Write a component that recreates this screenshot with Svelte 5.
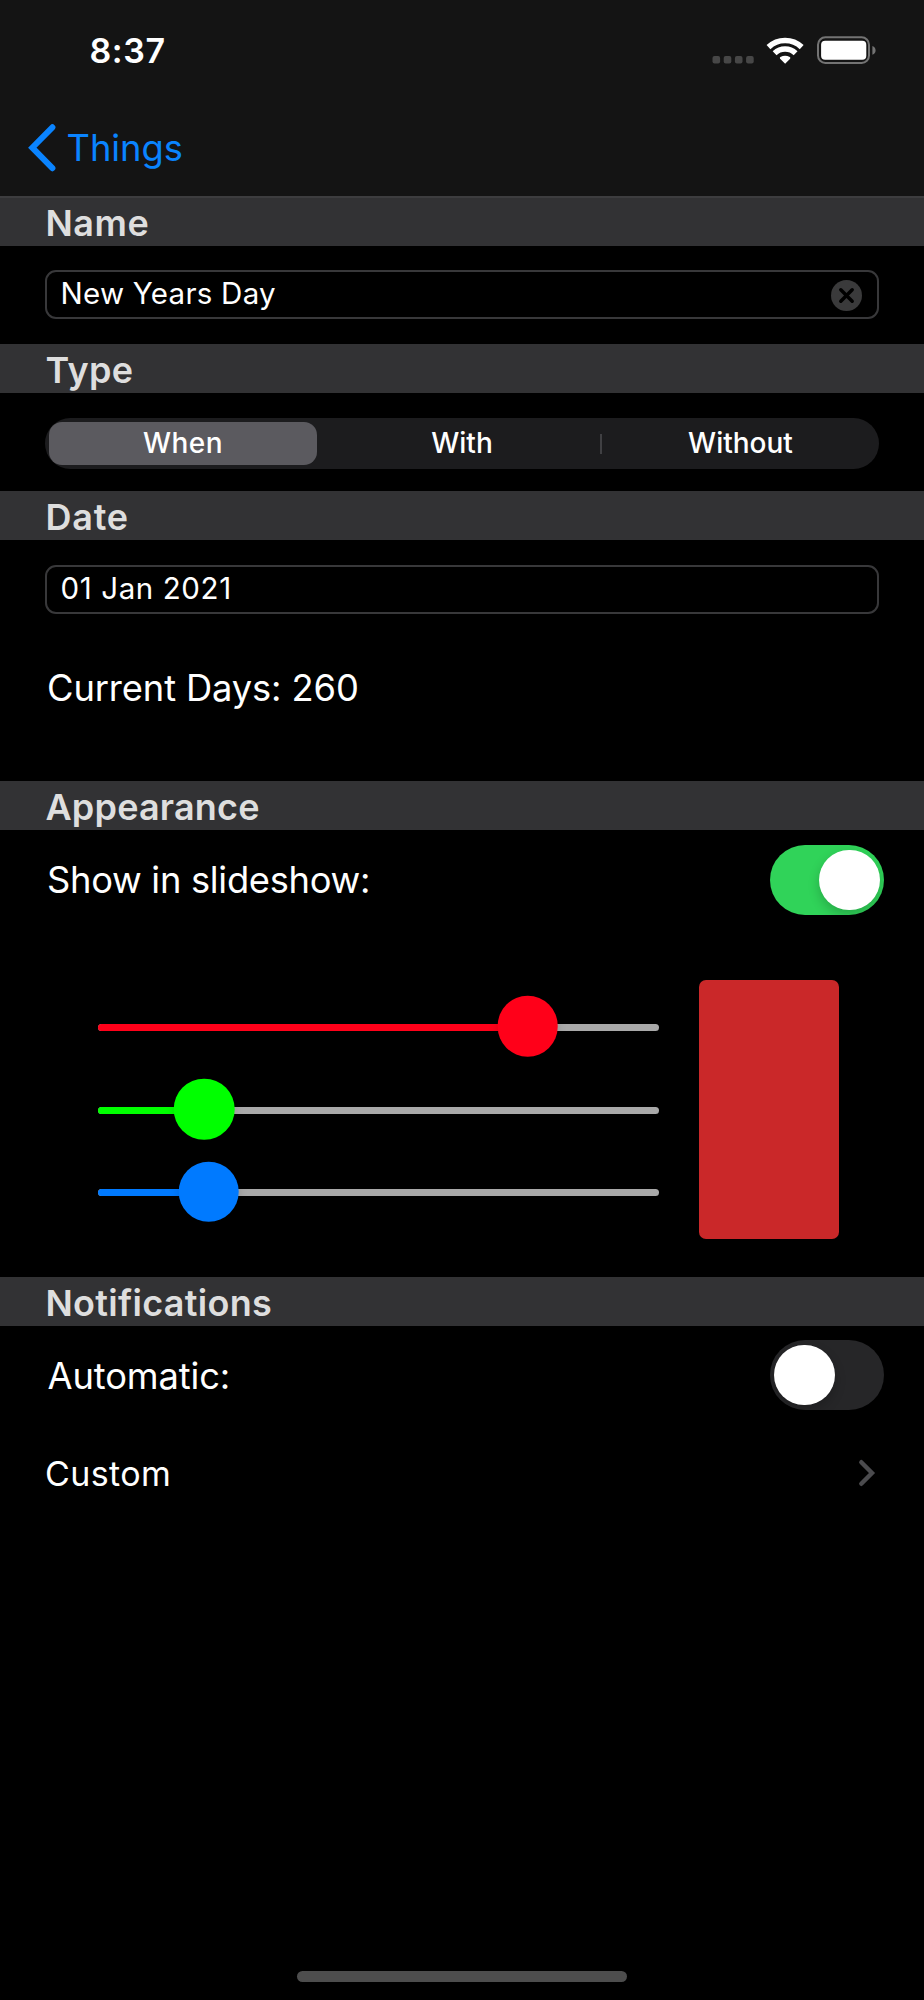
<script>
  let name = $state('New Years Day');
  let selected = $state('When');
  let slideshow = $state(true);
  let automatic = $state(false);
  const types = ['When', 'With', 'Without'];
  const channels = [
    { id: 'red', color: '#ff0019', at: 76.6 },
    { id: 'green', color: '#00ff00', at: 18.95 },
    { id: 'blue', color: '#007aff', at: 19.75 }
  ];
</script>

{#snippet heading(text, spacing)}
  <h2 style:letter-spacing="{spacing}px">{text}</h2>
{/snippet}

<main>
  <header>
    <div class="status">
      <span class="time">8:37</span>
      <svg width="166" height="32" viewBox="0 0 166 32" aria-label="Wi-Fi, battery full">
        <g fill="#474747">
          <rect x="1.5" y="22" width="7.6" height="7.4" rx="2" />
          <rect x="12.7" y="22" width="7.6" height="7.4" rx="2" />
          <rect x="23.9" y="22" width="7.6" height="7.4" rx="2" />
          <rect x="35.1" y="22" width="7.6" height="7.4" rx="2" />
        </g>
        <g fill="none" stroke="#fff" stroke-width="5.6">
          <path d="M57.5 13.1A24.2 24.2 0 0 1 90.7 13.1" />
          <path d="M63.6 19.2A15.3 15.3 0 0 1 84.6 19.2" />
        </g>
        <path d="M74.1 29.7l-5-5q-.7-.9.3-1.6q4.7-2.9 9.4 0q1 .7.3 1.6z" fill="#fff" />
        <rect x="107" y="3.3" width="51" height="25.6" rx="7.4" fill="none" stroke="#737373" stroke-width="2" />
        <rect x="110.1" y="6.7" width="45.2" height="19" rx="4" fill="#fff" />
        <path d="M161.4 12v8.8q3.2-1.4 3.2-4.4t-3.2-4.4z" fill="#737373" />
      </svg>
    </div>
    <a class="back" href="#things">
      <svg width="28" height="48" viewBox="0 0 28 48"><path d="M24.4 3.3L4.3 23.7l20.1 20.5" fill="none" stroke="#0a84ff" stroke-width="6" stroke-linecap="round" stroke-linejoin="miter" /></svg>
      <span>Things</span>
    </a>
  </header>

  <section class="name">
    {@render heading('Name', 0.5)}
    <div class="field">
      <span class="value">{name}</span>
      <button class="clear" aria-label="Clear text" onclick={() => (name = '')}>
        <svg width="31" height="31" viewBox="0 0 31 31"><circle cx="15.5" cy="15.5" r="15.5" fill="#3a3a3b" /><path d="M9.8 9.8l11.4 11.4m0-11.4L9.8 21.2" stroke="#000" stroke-width="3.5" stroke-linecap="round" /></svg>
      </button>
    </div>
  </section>

  <section class="type">
    {@render heading('Type', 0.4)}
    <div class="segments">
      {#each types as type}
        <button class:active={selected === type} onclick={() => (selected = type)}>{type}</button>
      {/each}
    </div>
  </section>

  <section class="date">
    {@render heading('Date', 0.75)}
    <div class="field"><span class="value digits">01 Jan 2021</span></div>
    <p class="days">Current Days: 260</p>
  </section>

  <section class="appearance">
    {@render heading('Appearance', 0.18)}
    <div class="row">
      <span>Show in slideshow:</span>
      <button class="switch" class:on={slideshow} aria-label="Show in slideshow" onclick={() => (slideshow = !slideshow)}><i></i></button>
    </div>
    <div class="mixer">
      <div class="sliders">
        {#each channels as c (c.id)}
          <div class="track" style:--c={c.color} style:--at="{c.at}%"><div class="fill"></div><i></i></div>
        {/each}
      </div>
      <div class="swatch"></div>
    </div>
  </section>

  <section class="notifications">
    {@render heading('Notifications', 0.28)}
    <div class="row">
      <span class="auto">Automatic:</span>
      <button class="switch" class:on={automatic} aria-label="Automatic" onclick={() => (automatic = !automatic)}><i></i></button>
    </div>
    <div class="custom">
      <span>Custom</span>
      <svg width="20" height="30" viewBox="0 0 20 30"><path d="M4.3 4.2L15 15 4.3 25.800" fill="none" stroke="#4b4b4e" stroke-width="4.4" stroke-linecap="round" stroke-linejoin="miter" /></svg>
    </div>
  </section>

  <div class="home"></div>
</main>

<style>
  :global(body) { background: #000; }
  main {
    box-sizing: border-box;
    width: 924px;
    height: 2000px;
    overflow: hidden;
    display: flex;
    flex-direction: column;
    background: #000;
    color: #fff;
    font-family: Inter, "Liberation Sans", sans-serif;
  }
  button { border: 0; padding: 0; margin: 0; background: none; color: inherit; font: inherit; cursor: pointer; }
  svg { display: block; flex: none; }
  header { height: 196px; background: #141414; flex: none; }
  .status {
    display: flex;
    justify-content: space-between;
    align-items: center;
    height: 100px;
    padding: 0 47px 0 89.5px;
  }
  .time { font-size: 34px; font-weight: 600; line-height: 42px; letter-spacing: .55px; padding-top: 2px; }
  .back {
    display: flex;
    align-items: center;
    gap: 11px;
    height: 96px;
    padding-left: 27.5px;
    color: #0a84ff;
    text-decoration: none;
    font-size: 36.3px;
    letter-spacing: -.05px;
  }
  section { flex: none; }
  h2 {
    box-sizing: border-box;
    height: 49px;
    margin: 0;
    padding: 3px 0 0 45.5px;
    line-height: 46px;
    background: #323234;
    color: #dedede;
    font-size: 36px;
    font-weight: 600;
  }
  .name { height: 148px; }
  .name h2 { height: 50px; padding-top: 4px; box-shadow: inset 0 2px #3d3d3f; }
  .type { height: 147px; }
  .date { height: 290px; }
  .appearance { height: 496px; }
  .field {
    box-sizing: border-box;
    display: flex;
    align-items: center;
    justify-content: space-between;
    height: 49px;
    margin: 24px 45px 0;
    padding: 0 15px 0 13.5px;
    border: 2px solid #38383a;
    border-radius: 11px;
  }
  .date .field { margin-top: 25px; }
  .value { font-size: 29.5px; line-height: 40px; letter-spacing: .25px; margin-top: -4px; }
  .digits { letter-spacing: .6px; }
  .clear { margin: 2px 0 0; }
  .segments {
    box-sizing: border-box;
    display: grid;
    grid-template-columns: 272px 282px 1fr;
    height: 51px;
    margin: 25px 45px 0;
    padding: 4px 1px 4px 4px;
    border-radius: 26px;
    background: #1c1c1e;
  }
  .segments button { font-size: 28px; font-weight: 500; line-height: 41px; padding-bottom: 1px; border-radius: 13px; }
  .segments button:nth-child(1) { margin-right: 4px; letter-spacing: .5px; }
  .segments button:nth-child(2) {
    background: linear-gradient(#404043, #404043) right 1px center / 2px 20px no-repeat;
  }
  .segments .active { background: #5b5a5f; }
  .days { margin: 51px 47px 0; font-size: 36.3px; line-height: 46px; letter-spacing: -.12px; }
  .row {
    display: flex;
    align-items: center;
    justify-content: space-between;
    height: 70px;
    margin: 15px 40px 0 47px;
    font-size: 36.3px;
    letter-spacing: -.28px;
  }
  .notifications .row { margin-top: 14px; }
  .auto { padding: 2px 0 0 .5px; letter-spacing: -.12px; }
  .switch {
    box-sizing: border-box;
    display: flex;
    width: 114px;
    height: 69.5px;
    padding: 4.5px 4.5px 4.5px 4px;
    border-radius: 35px;
    background: #262628;
    overflow: hidden;
  }
  .switch i { width: 60.5px; height: 60.5px; border-radius: 50%; background: #fff; box-shadow: 0 5px 12px #0003; }
  .switch.on { justify-content: flex-end; background: #30d359; }
  .mixer { display: flex; justify-content: space-between; margin: 65px 85px 0 98px; height: 259px; }
  .sliders { width: 561px; display: flex; flex-direction: column; gap: 75.6px; padding-top: 44.3px; }
  .track { position: relative; height: 7px; border-radius: 4px; background: #a9a9a9; }
  .fill { width: var(--at); height: 7px; border-radius: 4px; background: var(--c); }
  .track i {
    position: absolute;
    left: var(--at);
    top: 2.2px;
    width: 60.6px;
    height: 60.6px;
    border-radius: 50%;
    background: var(--c);
    transform: translate(-50%, -50%);
    box-shadow: 0 3px 10px #0002;
  }
  .swatch { width: 140px; border-radius: 7px; background: #ca2829; }
  .custom {
    display: flex;
    align-items: center;
    justify-content: space-between;
    height: 62px;
    margin: 32px 47px 0 45px;
    font-size: 34px;
    letter-spacing: .38px;
  }
  .home { width: 330px; height: 11px; margin: auto 0 18px 297px; border-radius: 6px; background: #4d4d4d; }
</style>
